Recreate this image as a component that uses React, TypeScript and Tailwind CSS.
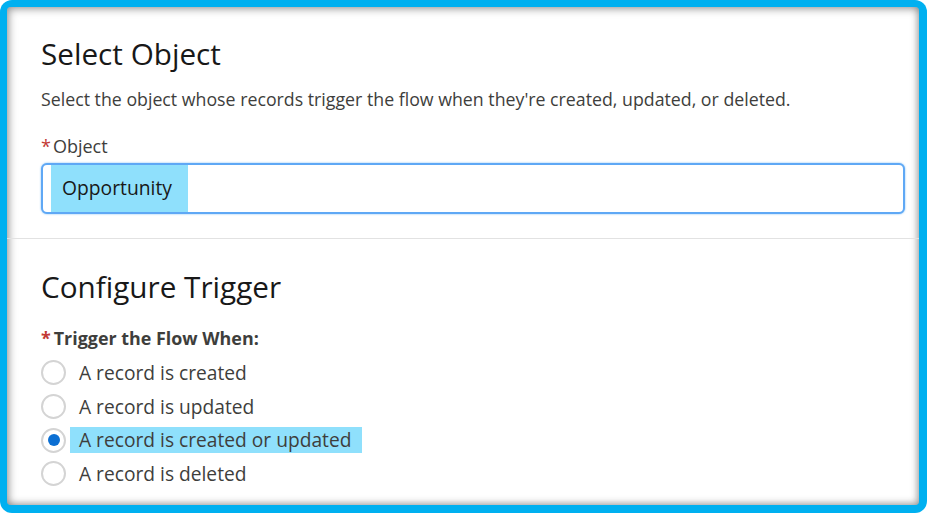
const options = [
  "A record is created",
  "A record is updated",
  "A record is created or updated",
  "A record is deleted",
];

function Radio({ checked }: { checked: boolean }) {
  return (
    <span className="flex h-[25px] w-[25px] shrink-0 items-center justify-center rounded-full border-2 border-[#d4d4d4] bg-white">
      {checked && <span className="h-[12px] w-[12px] rounded-full bg-[#0b6fd3]" />}
    </span>
  );
}

export default function App() {
  const selected = 2;
  return (
    <div className="h-[513px] w-[927px] bg-white font-['Open_Sans',sans-serif]">
      <div className="h-full w-full rounded-[12px] bg-[#00b0f0] pb-[8px] pl-[7px] pr-[8px] pt-[7px]">
        <div className="h-full overflow-hidden rounded-[4px] bg-white shadow-[inset_2px_2px_9px_rgba(0,0,0,0.35),inset_-2px_-2px_7px_rgba(0,0,0,0.25)]">
          <section className="px-[34px] pt-[31px]">
            <h1 className="text-[29.7px] leading-[32px] text-[#181818]">Select Object</h1>
            <p className="mt-[18px] whitespace-nowrap text-[17.75px] leading-[22px] text-[#3e3e3c]">
              Select the object whose records trigger the flow when they're created, updated, or deleted.
            </p>
            <div className="mt-[25px] flex items-center text-[18px] leading-[22px] text-[#3e3e3c]">
              <span className="mr-[2px] text-[#c23934]">*</span>
              Object
            </div>
            <div className="mt-[6px] flex h-[51px] w-[864px] items-stretch rounded-[6px] border-2 border-[#5fa8f5] bg-white pl-[8px] shadow-[0_0_2px_rgba(21,137,238,0.6)]">
              <span className="flex w-[137px] items-center bg-[#8fe0fc] pl-[11px] text-[19.3px] text-[#181818]">
                Opportunity
              </span>
            </div>
          </section>
          <div className="mt-[24px] h-px bg-[#e2e2e2]" />
          <section className="px-[34px] pt-[31px]">
            <h2 className="text-[29.7px] leading-[34px] text-[#181818]">Configure Trigger</h2>
            <div className="mt-[23px] flex items-center whitespace-nowrap text-[17.9px] font-bold leading-[22px] text-[#3e3e3c]">
              <span className="mr-[3px] text-[#c23934]">*</span>
              Trigger the Flow When:
            </div>
            <div className="mt-[7px] flex flex-col">
              {options.map((label, i) => (
                <div key={label} className="flex h-[33.7px] items-center">
                  <Radio checked={i === selected} />
                  <span
                    className={
                      i === selected
                        ? "ml-[4px] whitespace-nowrap bg-[#8fe0fc] pl-[9px] pr-[11px] text-[19.2px] leading-[26px] text-[#3e3e3c]"
                        : "ml-[13px] whitespace-nowrap text-[19.2px] leading-[26px] text-[#3e3e3c]"
                    }
                  >
                    {label}
                  </span>
                </div>
              ))}
            </div>
          </section>
        </div>
      </div>
    </div>
  );
}
